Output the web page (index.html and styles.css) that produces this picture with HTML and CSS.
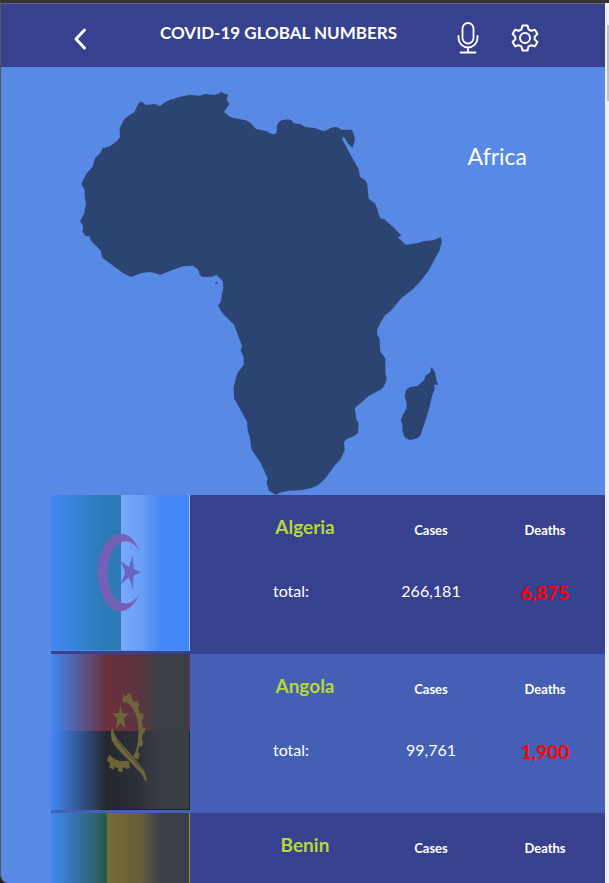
FILE: index.html
```html
<!DOCTYPE html>
<html lang="en">
<head>
<meta charset="utf-8">
<title>COVID-19 Global Numbers</title>
<link rel="stylesheet" href="styles.css">
</head>
<body>
<div class="window">
<div class="app">
  <header class="bar">
    <button class="icon-btn back" aria-label="Back">
      <svg width="14" height="24" viewBox="0 0 14 24"><path d="M11.500 3L3 12l8.500 9" fill="none" stroke="#fff" stroke-width="3" stroke-linecap="round" stroke-linejoin="round"/></svg>
    </button>
    <h1 class="title">COVID-19 GLOBAL NUMBERS</h1>
    <div class="actions">
      <button class="icon-btn" aria-label="Voice search">
        <svg width="22" height="32" viewBox="0 0 22 32" fill="none" stroke="#fff" stroke-width="1.800" stroke-linecap="round"><rect x="5.500" y="1" width="11" height="20.500" rx="5.500"/><path d="M1.500 14v2a9.500 9.500 0 0 0 19 0v-2M11 25.500v5M3.500 30.500h15"/></svg>
      </button>
      <button class="icon-btn" aria-label="Settings">
        <svg width="28" height="28" viewBox="0 0 28 28" fill="none" stroke="#fff" stroke-width="2" stroke-linejoin="round"><circle cx="14" cy="14" r="5"/><path d="M11.500 1.500h5l1 3.800 2.700 1.500 3.700-1.100 2.500 4.300-2.700 2.600v2.800l2.700 2.600-2.500 4.300-3.700-1.100-2.700 1.500-1 3.800h-5l-1-3.800-2.700-1.500-3.700 1.100-2.500-4.300 2.700-2.600v-2.800l-2.700-2.600 2.500-4.300 3.700 1.100 2.700-1.500z"/></svg>
      </button>
    </div>
  </header>

  <main>
    <section class="hero">
      <svg class="map" viewBox="240 273 1089 1212" role="img" aria-label="Map of Africa">
        <path d="M422 304L438 315 465 312 480 318Q505 298 520 297 550 286 575 285L600 287 615 282 645 285 665 276 676 283 684 283 680 298 688 312 672 336Q685 350 700 354L738 361 753 370 768 387 780 389 800 394Q815 404 818 403 830 401 830 395L831 375Q837 364 845 361L865 358Q876 360 882 370L902 373 915 381 945 384Q960 391 972 393 982 392 990 385L1002 381 1012 382 1025 389 1056 389 1065 415Q1064 432 1057 443L1045 432 1032 410Q1027 410 1026 416L1048 458 1076 508 1080 530 1095 540Q1104 550 1103 565L1106 596 1125 610Q1133 625 1135 640L1141 655 1153 658 1180 682 1203 705 1200 710 1193 712 1217 734 1255 729 1270 724 1300 721 1323 711 1325 725 1318 752 1285 813 1260 845 1237 869 1205 893 1172 933 1155 946 1142 967 1132 988 1131 1002 1139 1017 1141 1055 1156 1075 1156 1118 1160 1138Q1155 1157 1145 1167L1105 1189 1064 1225 1070 1262 1076 1268 1074 1300 1062 1308 1040 1317 1032 1327 1034 1350 1022 1378 1005 1395 980 1430Q955 1458 942 1461L925 1466 900 1471 865 1472 840 1478 827 1484 807 1472 800 1450 803 1435 780 1385 755 1350 749 1310 743 1290 741 1265 702 1195 701 1160 712 1120 731 1095 731 1072 722 1052 726 1038 708 990 703 975 670 943 654 918 664 902 665 885 670 865 668 842 650 825 635 830 608 831 600 826 595 810Q585 799 578 797L550 799 535 803 510 813 480 825Q465 818 450 816L425 819 393 831 370 820 307 773 302 752 288 737 272 722 270 710 255 707 248 695 249 677 240 663 252 642 258 610 254 590 254 570 244 552 260 520 278 500 285 475 300 460 308 445 330 438Q350 427 360 412L359 385 373 357Q385 346 403 337L413 315z"/>
        <path d="M1294 1101L1305 1117 1310 1145 1314 1150 1314 1156 1303 1153 1304 1167 1297 1185 1285 1235 1262 1305 1252 1315 1233 1320Q1218 1317 1213 1310L1207 1290 1207 1273 1202 1262 1208 1245 1220 1225 1220 1210 1214 1190 1218 1170 1230 1161 1252 1158 1272 1141 1277 1127 1290 1118z"/>
        <circle cx="649" cy="849" r="3"/>
      </svg>
      <h2 class="region">Africa</h2>
    </section>

    <ul class="countries">
      <li class="country">
        <svg class="flag" viewBox="0 0 139 156" preserveAspectRatio="none" role="img" aria-label="Flag of Algeria">
          <defs>
            <linearGradient id="dzl"><stop offset="0" stop-color="#4287f5"/><stop offset=".75" stop-color="#2c7bb7"/><stop offset="1" stop-color="#2d7ab2"/></linearGradient>
            <linearGradient id="dzr"><stop offset="0" stop-color="#77a8f9"/><stop offset=".3" stop-color="#6a9ff7"/><stop offset=".58" stop-color="#4387f5"/></linearGradient>
          </defs>
          <path fill="url(#dzl)" d="M0 0h70v156H0z"/>
          <path fill="url(#dzr)" d="M70 0h69v156H70z"/>
          <path fill="#a5c4f7" d="M138 0h1v156h-1z"/>
          <path fill="#5896e8" opacity=".7" d="M0 155h139v1H0z"/>
          <path fill="#7560b8" d="M89 57C84 44 77 38.700 69.500 38.700C57 38.700 46.700 56 46.700 77.500S57 116.300 69.500 116.300C77 116.300 84 110 89 97.500C85 105 80 108.500 75 108.500C65 108.500 56.700 95 56.700 77.500S65 46.300 75 46.300C80 46.300 85 50 89 57z"/>
          <path fill="#6568c8" d="M90.300 77.500L82.700 80.500 82 95 78 82.500 69.500 89 74.300 77.500 69.500 66 78 72 82 60 82.700 74z"/>
        </svg>
        <div class="stats">
          <h3 class="name">Algeria</h3><h4 class="label">Cases</h4><h4 class="label">Deaths</h4>
          <p class="total">total:</p><p class="cases">266,181</p><p class="deaths">6,875</p>
        </div>
      </li>
      <li class="country">
        <svg class="flag" viewBox="0 0 139 156" preserveAspectRatio="none" role="img" aria-label="Flag of Angola">
          <defs>
            <linearGradient id="aot"><stop offset="0" stop-color="#4287f5"/><stop offset=".4" stop-color="#6a2f3c"/><stop offset=".62" stop-color="#5d343f"/><stop offset=".79" stop-color="#3a3f47"/></linearGradient>
            <linearGradient id="aob"><stop offset="0" stop-color="#4287f5"/><stop offset=".4" stop-color="#24272e"/><stop offset=".6" stop-color="#2b2e37"/><stop offset=".79" stop-color="#393e46"/></linearGradient>
          </defs>
          <path fill="url(#aot)" d="M0 0h139v78H0z"/>
          <path fill="url(#aob)" d="M0 77h139v79H0z"/>
          <path fill="#8b2a3c" d="M138 0h1v77h-1z"/>
          <path fill="#1d2027" d="M138 77h1v79h-1zM50 155h89v1H50z"/>
          <g transform="scale(.3333) translate(-33 -42)" fill="#6d6537">
            <path d="M241 194L247 220 265 220 252 236 257 265 241 250 228 265 232 237 218 220 236 219z"/>
            <path d="M247 185L249 165 260 168 263 159 274 163 274 174 285 187 293 183 298 194 294 204 301 221 309 220 311 234 306 241 308 262 315 264 314 278 308 281 305 301 310 304 307 318 299 319 294 334 299 345 294 359 279 350Q294 325 295 290Q299 240 280 207Q267 186 247 185z"/>
            <path d="M217 260Q221 283 235 300L266 335 297 371Q318 394 321 422L315 423Q309 404 294 391L260 355Q226 322 216 302Q211 286 214 270z"/>
            <path d="M200 360L208 345Q223 360 243 364L266 362 270 384 260 388 256 381 248 384 248 395 235 395 234 384 223 381 220 389 208 382 211 371z"/>
          </g>
          <path fill="none" stroke="#343437" stroke-width=".7" d="M66 86Q77 101 91 115"/>
        </svg>
        <div class="stats">
          <h3 class="name">Angola</h3><h4 class="label">Cases</h4><h4 class="label">Deaths</h4>
          <p class="total">total:</p><p class="cases">99,761</p><p class="deaths">1,900</p>
        </div>
      </li>
      <li class="country">
        <svg class="flag" viewBox="0 0 139 156" preserveAspectRatio="none" role="img" aria-label="Flag of Benin">
          <defs>
            <linearGradient id="bjl"><stop offset="0" stop-color="#4287f5"/><stop offset=".9" stop-color="#2a5d59"/><stop offset="1" stop-color="#275748"/></linearGradient>
            <linearGradient id="bjr"><stop offset="0" stop-color="#776b36"/><stop offset=".4" stop-color="#675e3a"/><stop offset=".65" stop-color="#3a3f47"/></linearGradient>
            <linearGradient id="bjb"><stop offset="0" stop-color="#773036"/><stop offset=".65" stop-color="#3a3f47"/></linearGradient>
          </defs>
          <path fill="url(#bjl)" d="M0 0h56v156H0z"/>
          <path fill="url(#bjr)" d="M56 0h83v78H56z"/>
          <path fill="url(#bjb)" d="M56 78h83v78H56z"/>
          <path fill="#a08b3a" d="M138 0h1v78h-1z"/>
        </svg>
        <div class="stats">
          <h3 class="name">Benin</h3><h4 class="label">Cases</h4><h4 class="label">Deaths</h4>
        </div>
      </li>
    </ul>
  </main>
</div>
<div class="track"><div class="thumb"></div></div>
</div>
</body>
</html>
```
FILE: styles.css
```css
* { box-sizing: border-box; }
body { margin: 0; background: #222; font-family: Lato, "Liberation Sans", sans-serif; color: #fff; }
h1, h2, h3, h4, p, ul { margin: 0; padding: 0; }
.window {
  display: flex;
  height: 100vh;
  overflow: hidden;
  border-top: 3px solid #333;
  border-left: 1px solid #555;
  border-bottom-left-radius: 8px;
}
.app { flex: 1; overflow: hidden; background: #5889e4; border-top: 1px solid #666; }
.track { width: 4px; background: #f1f1f1; padding: 22px 0 0 2px; }
.thumb { height: 76px; background: #c1c1c1; }

.bar { display: flex; align-items: center; height: 63px; padding: 0 66px 0 72px; background: #37418f; }
.icon-btn { display: block; padding: 0; border: 0; background: none; }
.icon-btn svg { display: block; }
.back { padding-top: 6px; }
.title { flex: 1; padding: 0 0 5px 73px; font-size: 17px; line-height: 24px; font-weight: 700; white-space: nowrap; }
.actions { display: flex; align-items: center; gap: 32px; padding-top: 5px; }

.hero { display: flex; padding: 24px 78px 0 79px; justify-content: space-between; }
.map { display: block; flex: none; width: 363px; max-width: 85%; fill: #2c4471; }
.region { padding-top: 49px; font-size: 23px; line-height: 32px; font-weight: 400; }

.countries { list-style: none; margin-left: 50px; }
.country { display: flex; height: 159px; background: #37418f; }
.country:nth-child(even) { background: #445fb3; }
.flag { flex: none; width: 139px; height: 156px; }
.stats {
  flex: 1;
  display: grid;
  grid-template-columns: 12fr 9fr 10fr;
  grid-template-rows: 64px 64px;
  align-items: center;
  text-align: center;
  padding-left: 43px;
}
.name { font-size: 19px; line-height: 24px; color: #b5d936; }
.label { padding-top: 5px; font-size: 13px; line-height: 18px; }
.total { padding-right: 28px; font-size: 16px; line-height: 20px; }
.cases { font-size: 16px; line-height: 20px; }
.deaths { padding-top: 4px; font-size: 19px; line-height: 24px; font-weight: 700; color: #f00; }
```
